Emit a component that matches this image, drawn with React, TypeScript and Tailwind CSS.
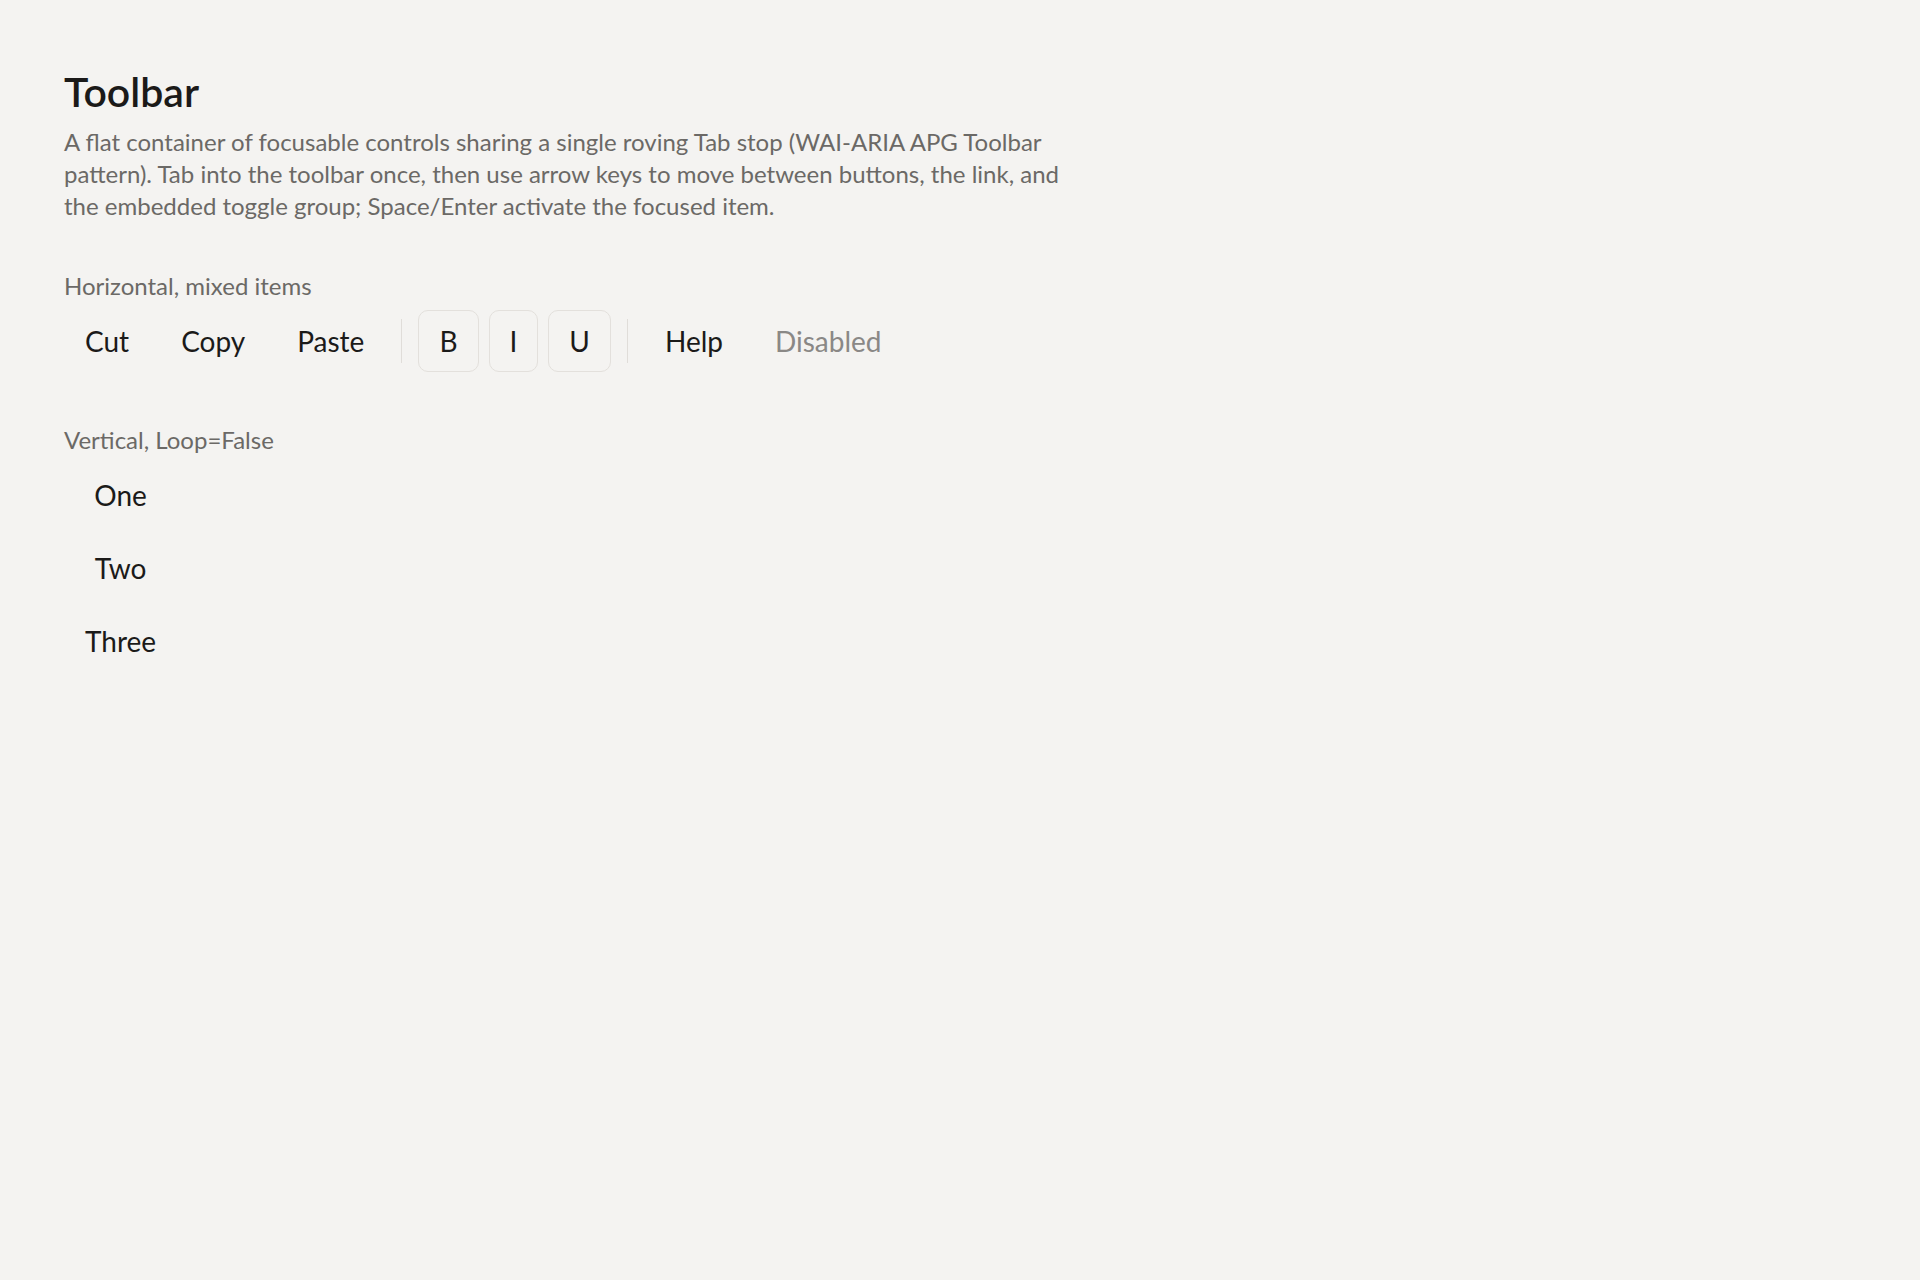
import React from "react";

type Item = {
  label: string;
  kind: "button" | "toggle" | "link" | "separator";
  disabled?: boolean;
};

const items: Item[] = [
  { label: "Cut", kind: "button" },
  { label: "Copy", kind: "button" },
  { label: "Paste", kind: "button" },
  { label: "", kind: "separator" },
  { label: "B", kind: "toggle" },
  { label: "I", kind: "toggle" },
  { label: "U", kind: "toggle" },
  { label: "", kind: "separator" },
  { label: "Help", kind: "link" },
  { label: "Disabled", kind: "button", disabled: true },
];

// shared look for every toolbar control; border colour is set per kind
const base =
  "flex h-[62px] items-center justify-center px-5 text-[28px] border rounded-[10px] outline-none";

function ToolbarItem({ item }: { item: Item }) {
  if (item.kind === "separator") {
    return <div role="separator" className="mx-1.5 h-11 w-px bg-[#e0ddd9]" />;
  }
  if (item.kind === "toggle") {
    return (
      <button
        aria-pressed={false}
        className={`${base} border-[#e3e0dc] text-[#1b1a19]`}
      >
        {item.label}
      </button>
    );
  }
  if (item.kind === "link") {
    return (
      <a
        href="#help"
        className={`${base} border-transparent text-[#1b1a19] no-underline`}
      >
        {item.label}
      </a>
    );
  }
  return (
    <button
      disabled={item.disabled}
      className={`${base} border-transparent ${
        item.disabled ? "text-[#8a8886] cursor-not-allowed" : "text-[#1b1a19]"
      }`}
    >
      {item.label}
    </button>
  );
}

export default function App() {
  return (
    <div
      className="min-h-screen bg-[#f4f3f1] px-16 pt-[68px]"
      style={{ fontFamily: '"Segoe UI", Lato, "Noto Sans", sans-serif' }}
    >
      <h1 className="text-[41px] font-semibold leading-[48px] text-[#1b1a19]">
        Toolbar
      </h1>
      <p className="mt-2.5 max-w-[1010px] text-[24px] leading-8 text-[#6b6966]">
        A flat container of focusable controls sharing a single roving Tab stop
        (WAI-ARIA APG Toolbar pattern). Tab into the toolbar once, then use arrow
        keys to move between buttons, the link, and the embedded toggle group;
        Space/Enter activate the focused item.
      </p>

      <section className="mt-12">
        <div className="text-[24px] leading-8 text-[#6b6966]">
          Horizontal, mixed items
        </div>
        <div
          role="toolbar"
          aria-orientation="horizontal"
          className="mt-2 flex items-center gap-2.5"
        >
          {items.map((item, i) => (
            <ToolbarItem key={i} item={item} />
          ))}
        </div>
      </section>

      <section className="mt-[52px]">
        <div className="text-[24px] leading-8 text-[#6b6966]">
          Vertical, Loop=False
        </div>
        <div
          role="toolbar"
          aria-orientation="vertical"
          className="mt-2 inline-flex flex-col gap-[11px]"
        >
          {["One", "Two", "Three"].map((label) => (
            <button
              key={label}
              className={`${base} border-transparent text-[#1b1a19]`}
            >
              {label}
            </button>
          ))}
        </div>
      </section>
    </div>
  );
}
